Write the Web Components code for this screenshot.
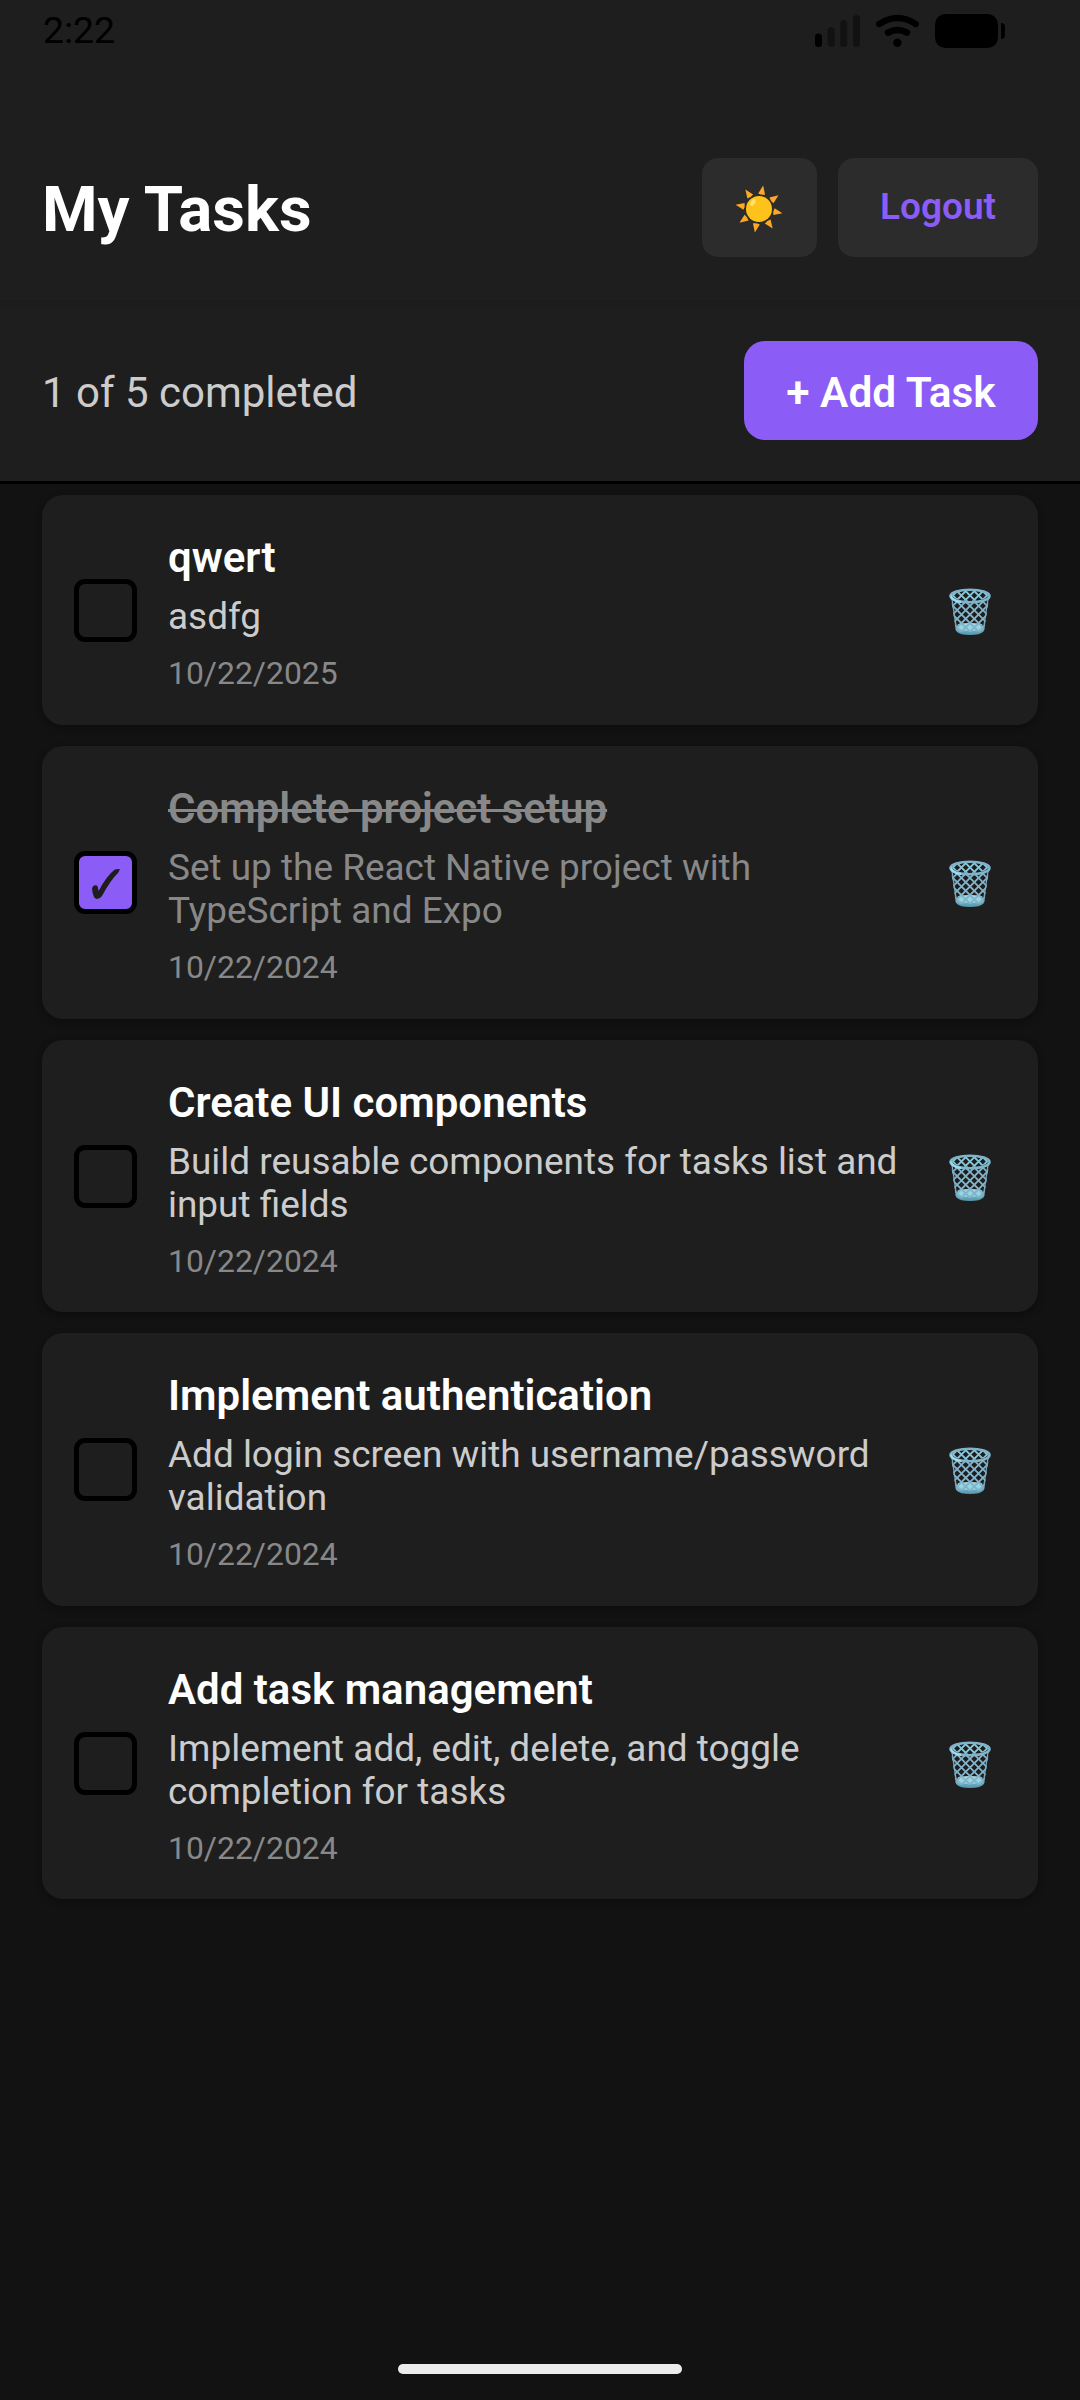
<!DOCTYPE html>
<html lang="en"><head><meta charset="utf-8"><title>My Tasks</title>
<style>
html,body{margin:0;background:#121212}
body{width:1080px;height:2400px;overflow:hidden;font-family:Roboto,sans-serif;color:#fff}
</style></head><body>
<task-app></task-app>
<script>
const define=(name,html)=>customElements.define(name,class extends HTMLElement{
  connectedCallback(){
    if(this.shadowRoot)return;
    const t=document.createElement('template');
    t.innerHTML=typeof html==='function'?html(this):html;
    this.attachShadow({mode:'open'}).append(t.content.cloneNode(true));
  }
});

define('status-bar',`<style>
:host{display:flex;align-items:flex-start;justify-content:space-between;height:110px;padding:0 74px 0 43px;box-sizing:border-box;color:#000}
span{font-size:37.400px;line-height:44px;margin-top:8px}
svg{display:block;margin-top:10px}
</style><span>2:22</span>
<svg width="194" height="44" viewBox="812 10 194 44">
<rect x="815" y="33.5" width="7" height="13.5" rx="3.5"/>
<g fill="#121212"><rect x="827.7" y="27" width="7" height="20" rx="3.5"/><rect x="840.2" y="20" width="7" height="27" rx="3.5"/><rect x="853" y="15" width="7" height="32" rx="3.5"/></g>
<g fill="none" stroke="#000" stroke-width="6.4" stroke-linecap="round"><path d="M879.3 24Q897.5 12 915.7 24"/><path d="M888 32.6Q897.5 27.4 907 32.6"/></g>
<circle cx="897.4" cy="42.8" r="4.2"/>
<rect x="935" y="14" width="63" height="34" rx="10.5"/>
<path d="M1001 23a4 4 0 0 1 4 4v8a4 4 0 0 1-4 4z"/>
</svg>`);

define('sun-icon',`<style>:host{display:block;width:48px;height:48px}svg{display:block}</style>
<svg width="48" height="48" viewBox="-24 -24 48 48"><g fill="#ffa726">${
[10,55,100,145,190,235,280,325].map(a=>`<path transform="rotate(${a})" d="M0 -23.8 3.500 -15.2Q0 -14 -3.500 -15.2Z"/>`).join('')
}</g><circle r="13" fill="#ffc21a"/><ellipse cx="-6" cy="-6.6" rx="2.2" ry="3.8" transform="rotate(33 -6 -6.6)" fill="#ffe267"/></svg>`);

define('trash-icon',`<style>:host{display:block;width:42px;height:48px}svg{display:block}</style>
<svg width="42" height="48" viewBox="0 0 42 48">
<defs><clipPath id="b"><path d="M2 11Q21 18 40 11L35 44Q21 50 7 44Z"/></clipPath><clipPath id="r"><ellipse cx="21" cy="7.5" rx="18" ry="5.4"/></clipPath>
<linearGradient id="g" x1="0" x2="0" y1="0" y2="1"><stop offset="0" stop-color="#8ccfe0"/><stop offset="1" stop-color="#5595ab"/></linearGradient></defs>
<path d="M7.5 38Q21 33 34.500 38L34.500 43.500Q31 47 21 47T7.500 43.500Z" fill="url(#g)"/>
<ellipse cx="21" cy="37" rx="12.500" ry="2" fill="#b9e2df"/>
<ellipse cx="21" cy="39.500" rx="12" ry="3.500" fill="#96d5e3"/>
<g stroke="#82b3ca" stroke-width="1.800" fill="none" clip-path="url(#b)">${
[-5,-4,-3,-2,-1,0,1,2,3,4,5].map(i=>`<path d="M${21+i*8.6-17} 9.500l34 34M${21+i*8.6+17} 9.500l-34 34"/>`).join('')
}</g>
<path d="M3 11 7.800 43M39 11 34.200 43" stroke="#7aaabf" stroke-width="1.300" fill="none"/>
<g clip-path="url(#r)" stroke="#86c5d8" stroke-width="1.900">${
[-3,-2,-1,0,1,2,3].map(i=>`<path d="M${21+i*8.6-7} 0.500l14 14M${21+i*8.6+7} 0.500l-14 14"/>`).join('')
}</g>
<ellipse cx="21" cy="8" rx="19.500" ry="6.300" fill="none" stroke="#80b4ca" stroke-width="2.600"/>
<path d="M2 7.500Q3 13 12 14" fill="none" stroke="#a2ddea" stroke-width="1.800"/>
</svg>`);

define('soft-button',`<style>
:host{display:flex;align-items:center;justify-content:center;box-sizing:border-box;width:200px;height:99px;border-radius:16px;background:#2c2c2c;color:#8b5cf6;font-size:37px;font-weight:600;line-height:44px;white-space:nowrap}
:host([primary]){width:294px;background:#8b5cf6;color:#fff;border-radius:21px;font-size:42.400px;padding-top:5px}
:host([icon]){width:115px}
</style><slot></slot>`);

define('app-header',`<style>
:host{display:flex;align-items:center;justify-content:space-between;height:190px;box-sizing:border-box;padding:5px 42px 0}
h1{margin:4px 0 0;font-size:63.500px;line-height:74px;font-weight:700}
div{display:flex;gap:21px}
sun-icon{margin:3px 1px 0 0}
.l{margin-top:-1px}
</style><h1>My Tasks</h1><div><soft-button icon><sun-icon></sun-icon></soft-button><soft-button><span class="l">Logout</span></soft-button></div>`);

define('task-summary',`<style>
:host{display:flex;align-items:center;justify-content:space-between;height:184px;box-sizing:border-box;padding:0 42px;border-bottom:3px solid #000;background:linear-gradient(#1c1c1c,#1e1e1e 12px)}
p{margin:5px 0 0;font-size:42px;line-height:50px;color:#ccc}
</style><p>1 of 5 completed</p><soft-button primary>+ Add Task</soft-button>`);

define('task-check',`<style>
:host{display:flex;align-items:center;justify-content:center;flex:none;box-sizing:border-box;width:63px;height:63px;border:5px solid #000;border-radius:11px}
:host([checked]){background:#8b5cf6}
svg{display:none}
:host([checked]) svg{display:block}
</style><svg width="53" height="53" viewBox="0 0 53 53"><path d="M13 32.500 14.200 30Q16.500 28.600 18.500 30L19.600 35Q27.500 20 35.500 13.800Q38.500 12.300 41 13.300L39 17Q31.500 24 23 40Q20.500 43.300 17.500 43L15.200 41.500Q13.300 37.500 13 32.500Z" fill="#1e1e1e"/></svg>`);

define('task-card',el=>`<style>
:host{display:flex;align-items:center;flex:none;box-sizing:border-box;height:272.500px;padding:0 47px 0 31.500px;background:#1e1e1e;border-radius:21px;box-shadow:0 3px 8px #0000004d}
:host([short]){height:230px}
.t{flex:1;margin-left:31.500px;min-width:0;padding-top:6px;white-space:nowrap}
:host([short]) .t{padding-top:4px}
h2,p{margin:0}
h2{font-size:42px;line-height:50px;font-weight:600}
.d{font-size:36.930px;line-height:43px;margin-top:12px;color:#ccc}
.a{font-size:31.900px;line-height:38px;margin-top:16px;color:#888}
:host([done]) h2{color:#888;text-decoration:line-through;text-decoration-thickness:2.500px}
:host([done]) .d{color:#888}
task-check{margin-top:1px}
trash-icon{margin:4px 0 0 20px}
:host([short]) trash-icon{margin-top:3px}
</style><task-check ${el.hasAttribute('done')?'checked':''}></task-check>
<div class="t"><h2>${el.getAttribute('heading')}</h2><p class="d"><slot></slot></p><p class="a">${el.getAttribute('date')}</p></div><trash-icon></trash-icon>`);

define('home-indicator',`<style>:host{display:block;width:284px;height:10px;border-radius:5px;background:#ececec;margin:auto auto 26px}</style>`);

define('task-app',`<style>
:host{display:flex;flex-direction:column;width:1080px;height:2400px;background:#121212}
header{background:#1e1e1e;height:484px}
main{display:flex;flex-direction:column;gap:21px;padding:11px 42px 0}
</style>
<header><status-bar></status-bar><app-header></app-header><task-summary></task-summary></header>
<main>
<task-card short heading="qwert" date="10/22/2025">asdfg</task-card>
<task-card done heading="Complete project setup" date="10/22/2024">Set up the React Native project with<br>TypeScript and Expo</task-card>
<task-card heading="Create UI components" date="10/22/2024">Build reusable components for tasks list and<br>input fields</task-card>
<task-card heading="Implement authentication" date="10/22/2024">Add login screen with username/password<br>validation</task-card>
<task-card heading="Add task management" date="10/22/2024">Implement add, edit, delete, and toggle<br>completion for tasks</task-card>
</main>
<home-indicator></home-indicator>`);
</script></body></html>
